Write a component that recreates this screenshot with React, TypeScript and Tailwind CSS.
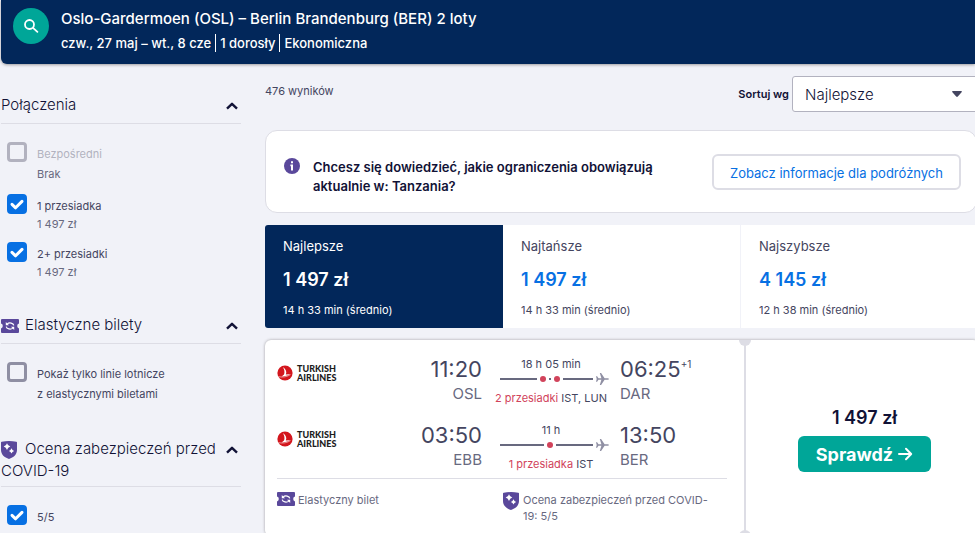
import { ReactNode } from "react"

const TicketIcon = () => (
    <svg viewBox="0 0 18 14" className="inline-block h-[14px] w-[18px] shrink-0">
        <path
            fill="#5a489b"
            d="M1 0h16a1 1 0 0 1 1 1v3.6a2.5 2.5 0 0 0 0 4.8V13a1 1 0 0 1-1 1H1a1 1 0 0 1-1-1V9.4a2.5 2.5 0 0 0 0-4.8V1a1 1 0 0 1 1-1z"
        />
        <path
            fill="none"
            stroke="#fff"
            strokeWidth="1.2"
            d="M12.8 6.4A3.8 2.9 0 0 0 6.2 4.9M5.2 7.6a3.8 2.9 0 0 0 6.6 1.5"
        />
        <path fill="#fff" d="M4.8 3v3.2H8zM13.2 11V7.8H10z" />
    </svg>
)

const ShieldIcon = () => (
    <svg viewBox="0 0 16 18" className="inline-block h-[18px] w-[16px] shrink-0">
        <path fill="#5a489b" d="M0 1.5Q0 .8.7.7Q8-.6 15.3.7q.7.1.7.8V9c0 4.5-3.5 7.5-8 9-4.5-1.5-8-4.5-8-9z" />
        <path
            fill="#fff"
            d="M6 2.2Q6.8 4.9 9.3 5.6 6.8 6.3 6 9 5.2 6.3 2.7 5.6 5.2 4.9 6 2.2zM10.5 7.2q.7 2.1 2.6 2.7-1.9.6-2.6 2.7-.7-2.1-2.6-2.7 1.9-.6 2.6-2.7z"
        />
    </svg>
)

const InfoIcon = () => (
    <svg viewBox="0 0 16 16" className="h-4 w-4 shrink-0">
        <circle cx="8" cy="8" r="8" fill="#5a489b" />
        <path fill="#fff" d="M7 3.2h2v2H7zM6.4 6.6H9v5.8H7V8.200h-.6z" />
    </svg>
)

const PlaneIcon = () => (
    <svg viewBox="0 0 13 14" className="ml-[3px] h-[14px] w-[13px] shrink-0">
        <path
            fill="#8f8fa3"
            d="M0 4.2h1.1L2.5 6.2H5.4L3.8 1h1.3l3.5 5.2h3Q13 6.4 13 7t-1.4.8h-3L5.1 13H3.8l1.6-5.2H2.5L1.1 9.8H0L.7 7z"
        />
    </svg>
)

const ChevronUp = () => (
    <svg viewBox="0 0 12 8" className="h-2 w-3">
        <path fill="none" stroke="#111236" strokeWidth="2.4" strokeLinejoin="round" d="M1 6.6 6 1.8l5 4.8" />
    </svg>
)

const TurkishLogo = () => (
    <div className="flex items-center gap-1" aria-label="Turkish Airlines">
        <svg viewBox="0 0 16 16" className="h-4 w-4 shrink-0">
            <circle cx="8" cy="8" r="7.600" fill="#d3161d" />
            <path fill="#fff" d="M5.8 2C9.2 4.4 10 7 8.8 9.6l4.400-.4c-3 1.300-4.600 2.200-9 2.400 1.600-.9 2.600-1.600 3-2.600C7.900 6.700 7.300 4.400 5.800 2z" />
            <path fill="none" stroke="#fff" strokeWidth=".5" d="M1.5 11.6c4 1 8.5.4 12-2" />
        </svg>
        <span className="font-['Lato'] text-[9px] leading-[9px] font-black text-[#1c1c1c]">
            TURKISH
            <br />
            AIRLINES
        </span>
    </div>
)

type CheckProps = {
    id: string
    label: ReactNode
    note?: string
    checked?: boolean
    disabled?: boolean
}

const Check = ({ id, label, note, checked, disabled }: CheckProps) => (
    <div className="flex gap-[10px] pl-[6px]">
        <div className="grid h-5 w-5 shrink-0">
            <input
                id={id}
                type="checkbox"
                defaultChecked={checked}
                disabled={disabled}
                className="peer col-start-1 row-start-1 h-5 w-5 appearance-none rounded-[4px] border-3 border-[#8f8fa3] checked:border-[#0770e3] checked:bg-[#0770e3] disabled:border-[#b2b2bf]"
            />
            <svg viewBox="0 0 20 20" className="pointer-events-none invisible col-start-1 row-start-1 h-5 w-5 peer-checked:visible">
                <path fill="none" stroke="#fff" strokeWidth="3" strokeLinecap="round" strokeLinejoin="round" d="m5 10.4 3.6 3.4L15 7.400" />
            </svg>
        </div>
        <label htmlFor={id} className={`pt-[2px] text-[11px] leading-5 ${disabled ? "text-[#b2b2bf]" : "text-[#444560]"}`}>
            {label}
            {note && (
                <span className={`block text-[#68697f] ${disabled ? "leading-5" : "leading-4"}`}>{note}</span>
            )}
        </label>
    </div>
)

type SectionProps = {
    title: string
    icon?: ReactNode
    tall?: boolean
    children: ReactNode
}

const Section = ({ title, icon, tall, children }: SectionProps) => (
    <section>
        <h2 className={`border-b border-[#dddde5] ${tall ? "pb-1" : "pb-[7px]"}`}>
            <button className="flex w-full items-start justify-between text-left text-[15px] leading-[22px] font-light text-[#111236]">
                <span>
                    {icon && <span className="mr-[6px] inline-flex w-[18px] align-middle">{icon}</span>}
                    {title}
                </span>
                <span className="pt-2 pr-[3px]">
                    <ChevronUp />
                </span>
            </button>
        </h2>
        <div className="flex flex-col gap-[10px] pt-[18px]">{children}</div>
    </section>
)

const tabs = [
    { name: "Najlepsze", price: "1 497 zł", time: "14 h 33 min (średnio)", active: true },
    { name: "Najtańsze", price: "1 497 zł", time: "14 h 33 min (średnio)", active: false },
    { name: "Najszybsze", price: "4 145 zł", time: "12 h 38 min (średnio)", active: false },
]

type Leg = {
    dep: string
    from: string
    arr: string
    to: string
    plus?: string
    duration: string
    stops: string
    via: string
    count: number
}

const legs: Leg[] = [
    { dep: "11:20", from: "OSL", arr: "06:25", to: "DAR", plus: "+1", duration: "18 h 05 min", stops: "2 przesiadki", via: "IST, LUN", count: 2 },
    { dep: "03:50", from: "EBB", arr: "13:50", to: "BER", duration: "11 h", stops: "1 przesiadka", via: "IST", count: 1 },
]

const LegRow = ({ leg }: { leg: Leg }) => (
    <div className="flex h-[66px] items-start">
        <div className="w-[90px] pt-[10px]">
            <TurkishLogo />
        </div>
        <div className="flex-1 pt-[2px] text-right">
            <div className="text-[22px] leading-[26px] text-[#444560]">{leg.dep}</div>
            <div className="text-[15px] leading-6 text-[#68697f]">{leg.from}</div>
        </div>
        <div className="flex w-[138px] flex-col items-center pt-[2px] text-[11px] text-[#444560]">
            <span className="leading-4">{leg.duration}</span>
            <div className="flex h-[14px] items-center pl-[6px]">
                <div className="flex h-[2px] w-[93px] items-center justify-center bg-[#68697f] pl-2">
                    {Array.from({ length: leg.count }, (_, i) => (
                        <span key={i} className="mx-px bg-white px-[3px]">
                            <span className="block h-[6px] w-[6px] rounded-full bg-[#d1435b]" />
                        </span>
                    ))}
                </div>
                <PlaneIcon />
            </div>
            <span className="pt-1 leading-4 whitespace-nowrap">
                <span className="text-[#d1435b]">{leg.stops}</span> {leg.via}
            </span>
        </div>
        <div className="w-[107px] pt-[2px]">
            <div className="flex text-[22px] leading-[26px] text-[#444560]">
                {leg.arr}
                {leg.plus && <sup className="top-0 text-[10px] leading-4">{leg.plus}</sup>}
            </div>
            <div className="text-[15px] leading-6 text-[#68697f]">{leg.to}</div>
        </div>
    </div>
)

export default function App() {
    return (
        <div className="h-screen overflow-hidden bg-[#f1f2f8] font-['Inter',sans-serif] text-[#111236]">
            {/* search summary */}
            <header className="ml-px flex h-16 items-start rounded-bl-md bg-[#02275a] pt-2 pl-3 text-white shadow-[0_1px_3px_rgba(37,32,31,0.4)]">
                <button aria-label="Szukaj" className="flex h-9 w-9 shrink-0 items-center justify-center rounded-full bg-[#00a698]">
                    <svg viewBox="0 0 16 16" className="h-4 w-4">
                        <path fill="none" stroke="#fff" strokeWidth="1.8" strokeLinecap="round" d="M11 6.5a4.5 4.5 0 1 1-9 0 4.5 4.5 0 0 1 9 0zM10 9.8l4.4 4" />
                    </svg>
                </button>
                <div className="pl-3">
                    <h1 className="text-[15px] leading-[22px] font-medium">Oslo-Gardermoen (OSL) – Berlin Brandenburg (BER) 2 loty</h1>
                    <p className="flex items-center pt-1 text-[13px] leading-[18px] font-medium">
                        <span>czw., 27 maj – wt., 8 cze</span>
                        <span className="ml-1 border-l border-white pl-1">1 dorosły</span>
                        <span className="ml-1 border-l border-white pl-1">Ekonomiczna</span>
                    </p>
                </div>
            </header>

            <div className="flex gap-6 pl-px">
                {/* filters */}
                <aside className="flex w-60 shrink-0 flex-col gap-[34px] pt-[30px]">
                    <Section title="Połączenia">
                        <Check id="direct" label="Bezpośredni" note="Brak" disabled />
                        <Check id="one-stop" label="1 przesiadka" note="1 497 zł" checked />
                        <Check id="two-stops" label="2+ przesiadki" note="1 497 zł" checked />
                    </Section>
                    <Section title="Elastyczne bilety" icon={<TicketIcon />}>
                        <Check
                            id="flexible"
                            label={
                                <>
                                    Pokaż tylko linie lotnicze
                                    <br />z elastycznymi biletami
                                </>
                            }
                        />
                    </Section>
                    <Section title="Ocena zabezpieczeń przed COVID-19" icon={<ShieldIcon />} tall>
                        <Check id="rating-5" label="5/5" checked />
                    </Section>
                </aside>

                <main className="-mr-[4px] min-w-0 flex-1 pt-3">
                    <div className="flex items-center justify-between">
                        <span className="pb-[6px] text-[11px] leading-4 text-[#444560]">476 wyników</span>
                        <div className="flex items-center gap-[3px]">
                            <label htmlFor="sort" className="text-[11px] font-semibold">
                                Sortuj wg
                            </label>
                            <div className="grid items-center">
                                <select
                                    id="sort"
                                    className="col-start-1 row-start-1 h-9 w-[187px] appearance-none rounded-[3px] border border-[#b2b2bf] bg-white pt-[2px] pl-3 text-[15px] font-light"
                                >
                                    <option>Najlepsze</option>
                                    <option>Najtańsze</option>
                                    <option>Najszybsze</option>
                                </select>
                                <svg viewBox="0 0 10 6" className="pointer-events-none col-start-1 row-start-1 mr-[17px] h-[6px] w-[10px] justify-self-end">
                                    <path fill="#444560" d="M.8 0h8.4q1.2.3.4 1.2L5.800 5.6q-.8.7-1.600 0L.4 1.200Q-.4.3.8 0z" />
                                </svg>
                            </div>
                        </div>
                    </div>

                    {/* travel restrictions */}
                    <div className="mt-[18px] mr-[2px] flex h-[83px] items-center rounded-xl border border-[#dddde5] bg-white pr-[15px] pl-[18px]">
                        <div className="self-start pt-[27px]">
                            <InfoIcon />
                        </div>
                        <p className="flex-1 pt-[10px] pl-[13px] text-[13px] leading-[19px] font-semibold">
                            Chcesz się dowiedzieć, jakie ograniczenia obowiązują
                            <br />
                            aktualnie w: Tanzania?
                        </p>
                        <button className="h-9 w-[249px] rounded-md border-2 border-[#dddde5] pt-1 text-[13px] whitespace-nowrap text-[#0770e3]">
                            Zobacz informacje dla podróżnych
                        </button>
                    </div>

                    {/* sort tabs */}
                    <div className="mt-3 grid grid-cols-3 overflow-hidden rounded-[3px] bg-white">
                        {tabs.map((tab) => (
                            <button
                                key={tab.name}
                                className={`h-[103px] pl-[18px] text-left ${tab.active ? "bg-[#02275a] text-white" : "border-r border-[#f1f2f8] text-[#444560]"}`}
                            >
                                <span className="block text-[13px] leading-5">{tab.name}</span>
                                <span className={`block pt-3 pb-[10px] text-[18px] leading-6 font-semibold ${tab.active ? "text-white" : "text-[#0770e3]"}`}>
                                    {tab.price}
                                </span>
                                <span className="block text-[11px] leading-4">{tab.time}</span>
                            </button>
                        ))}
                    </div>

                    {/* ticket */}
                    <article className="mt-3 flex h-[196px] rounded-md bg-white shadow-[0_0_3px_rgba(37,32,31,0.4)]">
                        <div className="w-[479px] pt-[14px] pr-[17px] pl-3">
                            {legs.map((leg) => (
                                <LegRow key={leg.from} leg={leg} />
                            ))}
                            <div className="mt-[-8px] flex border-t border-[#dddde5] pt-[13px] text-[11px] leading-4 text-[#68697f]">
                                <div className="flex flex-1 items-start gap-[3px]">
                                    <TicketIcon /> Elastyczny bilet
                                </div>
                                <div className="flex w-[224px] items-start gap-1">
                                    <ShieldIcon />
                                    <span>
                                        Ocena zabezpieczeń przed COVID-
                                        <br />
                                        19: 5/5
                                    </span>
                                </div>
                            </div>
                        </div>
                        <div className="flex w-[2px] flex-col items-center justify-between bg-[#dddde5]">
                            <span className="h-[6px] w-3 rounded-b-full bg-[#dddde5]" />
                            <span className="h-[6px] w-3 rounded-t-full bg-[#dddde5]" />
                        </div>
                        <div className="flex flex-1 flex-col items-center pt-[66px] pl-1">
                            <span className="text-[18px] leading-6 font-semibold">1 497 zł</span>
                            <button className="mt-[6px] flex h-9 w-[133px] items-center justify-center gap-1 rounded-md bg-[#00a698] text-[18px] font-bold text-white">
                                Sprawdź
                                <svg viewBox="0 0 16 16" className="h-4 w-4">
                                    <path fill="none" stroke="#fff" strokeWidth="2" strokeLinecap="round" strokeLinejoin="round" d="M2 8h12M9 2.8 14.2 8 9 13.2" />
                                </svg>
                            </button>
                        </div>
                    </article>
                </main>
            </div>
        </div>
    )
}
